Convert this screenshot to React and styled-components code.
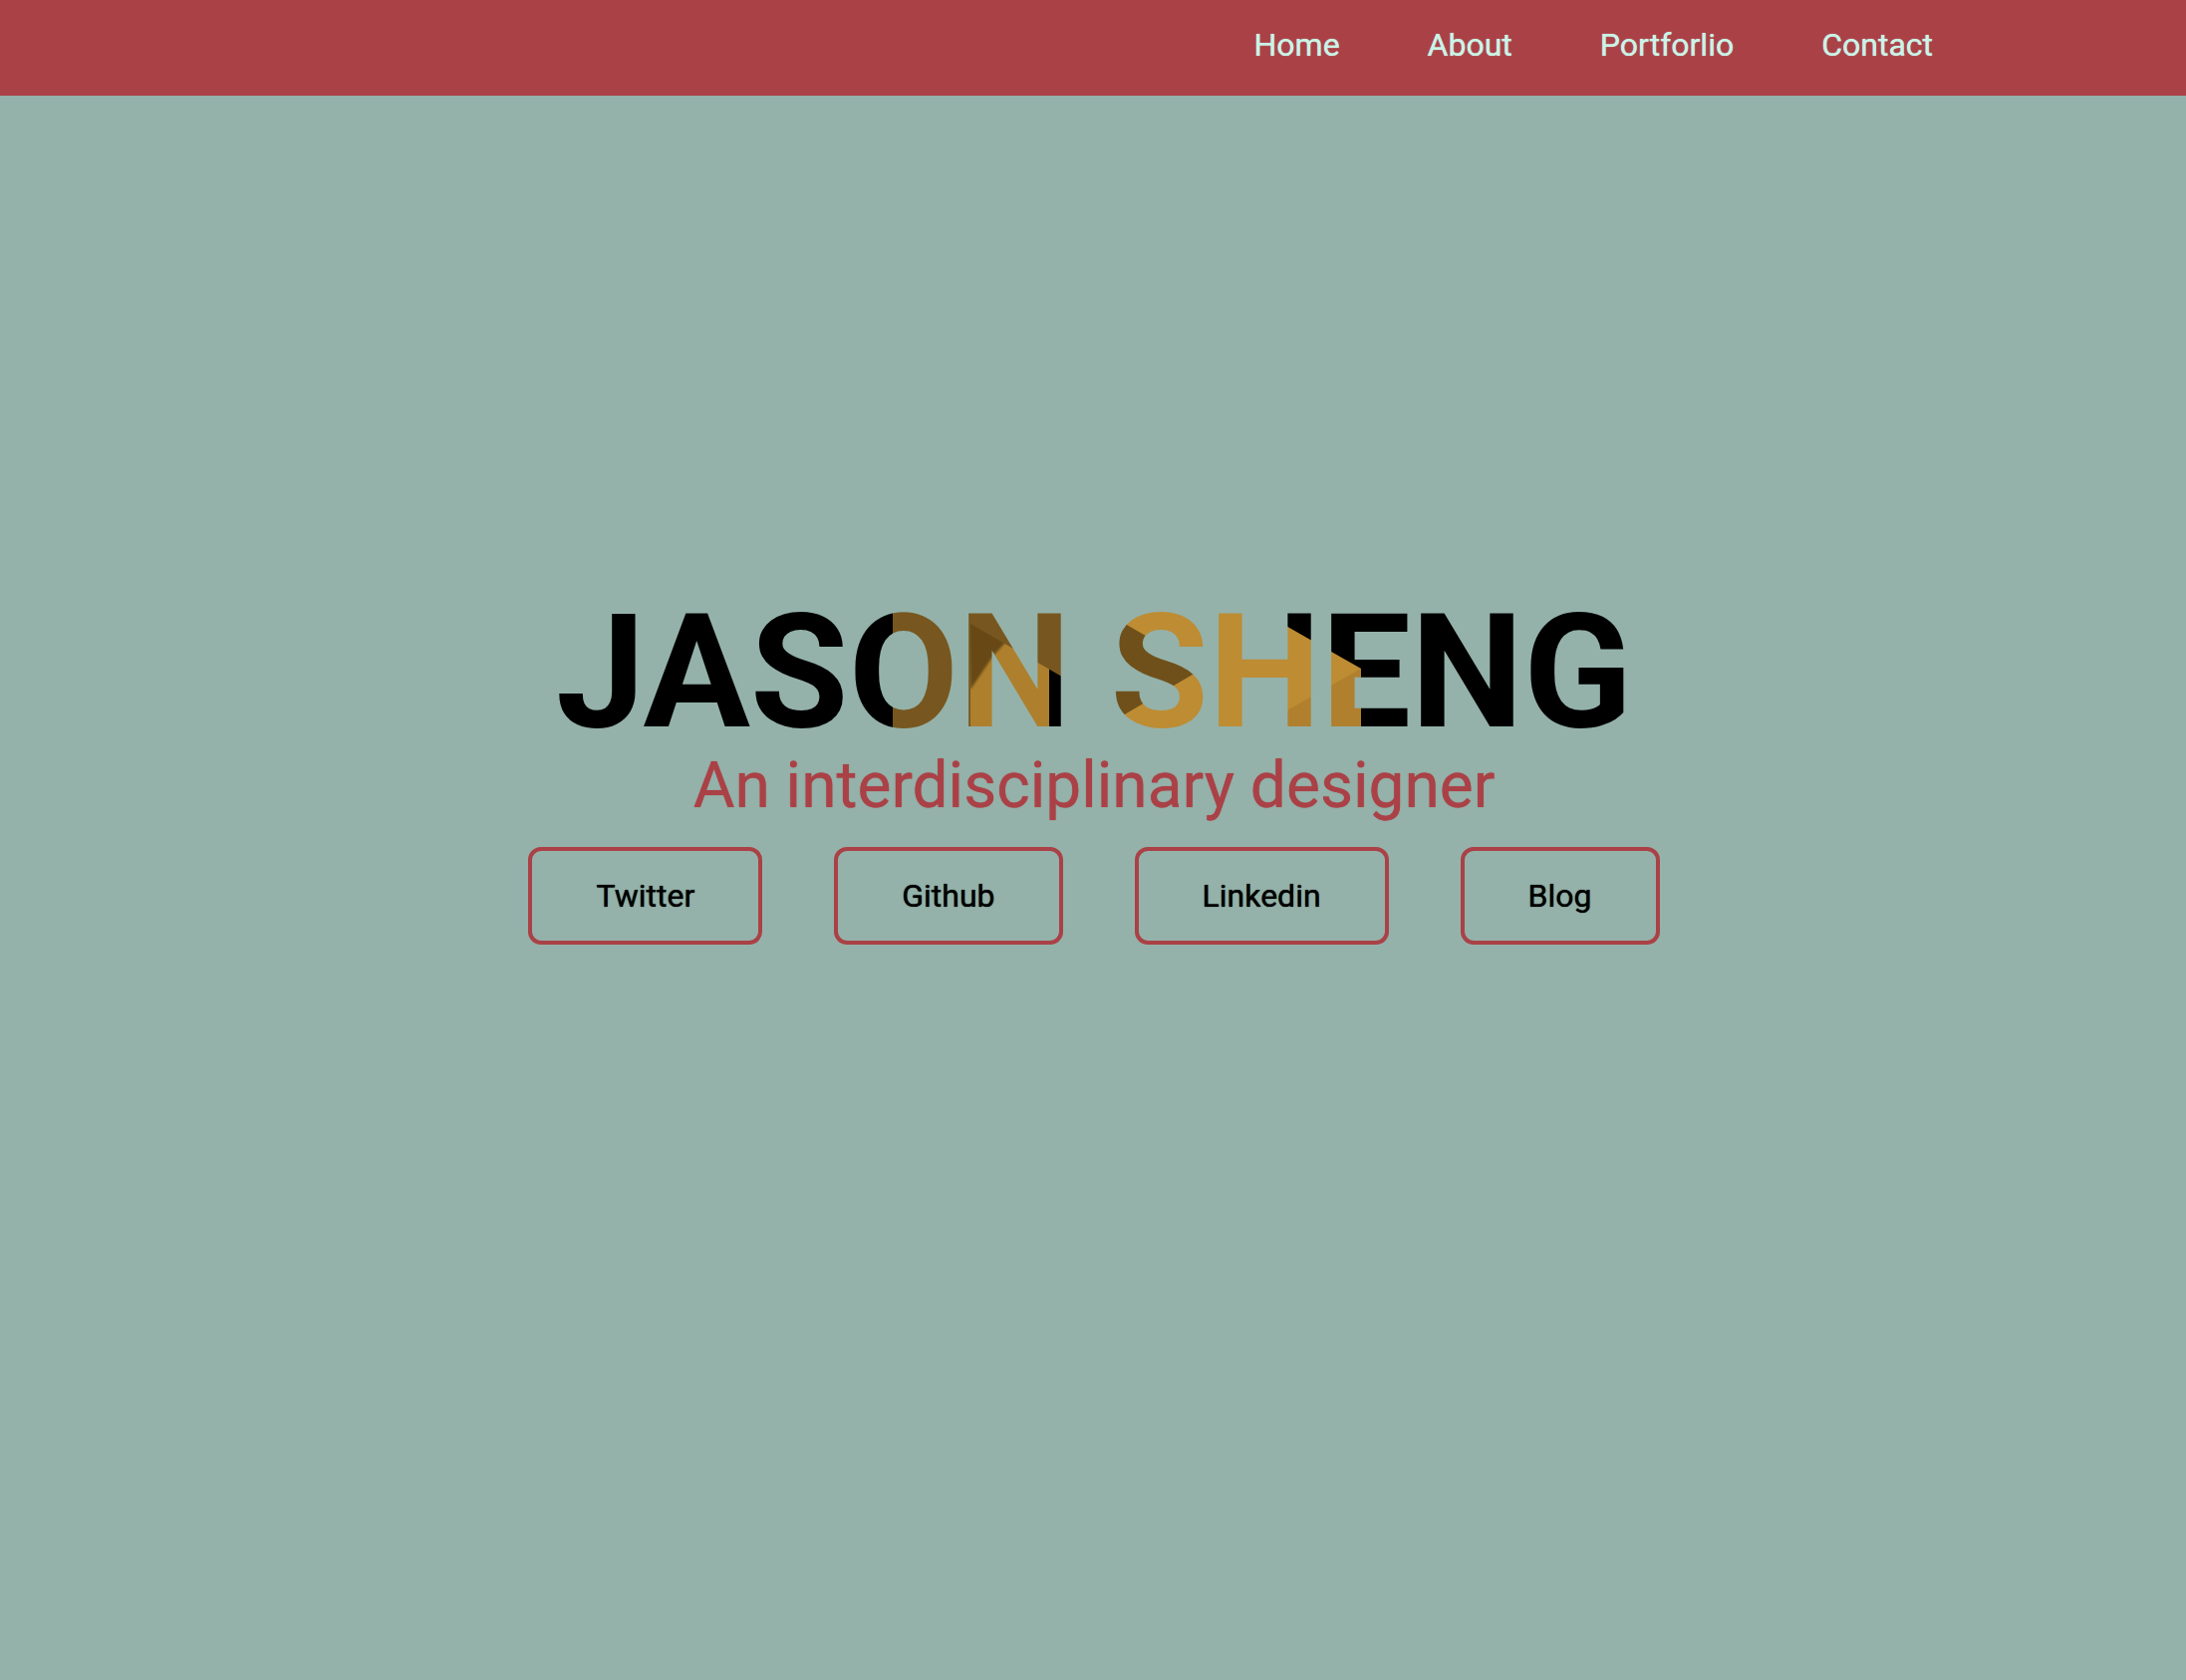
import React from "react";
import styled, { createGlobalStyle } from "styled-components";

const colors = {
  red: "#aa4146",
  sage: "#94b2aa",
  mint: "#cbf3e7",
  ink: "#000000",
};

// Folded ribbon artwork that shows through the letters of the name.
const ribbon = `<svg xmlns="http://www.w3.org/2000/svg" width="560" height="160" viewBox="818 595 560 160">
<defs><filter id="s" x="-10%" y="-10%" width="120%" height="120%"><feGaussianBlur stdDeviation="1"/></filter></defs>
<path fill="#ae802d" d="M972 595H1053V757H972Z"/>
<path fill="#684a19" filter="url(#s)" d="M972 622L1010 644L997 658L974 692Z"/>
<path fill="#77571f" d="M896 595H1090V693L974 626V757H896Z"/>
<path fill="#be8c33" d="M1110 595H1233L1366 671V757H1110Z"/>
<path fill="#b0802f" d="M1366 671V757H1214Z"/>
<path fill="#6f501a" d="M1110 615L1207 671L1110 728Z"/>
</svg>`;
const ribbonUrl = `url("data:image/svg+xml,${encodeURIComponent(ribbon)}")`;

const GlobalStyle = createGlobalStyle`
  *, *::before, *::after { box-sizing: border-box; }
  body {
    margin: 0;
    background: ${colors.sage};
    font-family: Roboto, "Liberation Sans", sans-serif;
  }
`;

const Page = styled.div`
  min-height: 100vh;
  display: flex;
  flex-direction: column;
`;

const Header = styled.header`
  background: ${colors.red};
  padding: 26px 254px 32px 32px;
`;

const Nav = styled.nav`
  display: flex;
  justify-content: flex-end;
  gap: 88px;
`;

const NavLink = styled.a`
  color: ${colors.mint};
  font-size: 32px;
  line-height: 38px;
  text-decoration: none;
  text-shadow: 0 0 1px currentColor;
`;

const Hero = styled.main`
  flex: 1;
  display: flex;
  flex-direction: column;
  align-items: center;
  justify-content: center;
  padding: 0 0 240px 2px;
`;

const Name = styled.h1`
  margin: 0;
  font-size: 160px;
  line-height: 160px;
  font-weight: 700;
  text-transform: uppercase;
  white-space: nowrap;
  color: transparent;
  background: ${ribbonUrl} center top / 560px 160px no-repeat ${colors.ink};
  -webkit-background-clip: text;
  background-clip: text;
`;

const Tagline = styled.p`
  margin: 0;
  color: ${colors.red};
  font-size: 64px;
  line-height: 68px;
  text-shadow: 0 0 1px currentColor;
`;

const LinkRow = styled.div`
  display: flex;
  gap: 72px;
  margin-top: 27px;
`;

const OutlineLink = styled.a`
  padding: 26px 64px;
  border: 4px solid ${colors.red};
  border-radius: 13px;
  color: ${colors.ink};
  font-size: 32px;
  line-height: 38px;
  text-decoration: none;
  text-shadow: 0 0 1px currentColor;
`;

const pages = ["Home", "About", "Portforlio", "Contact"];
const profiles = ["Twitter", "Github", "Linkedin", "Blog"];

export default function App() {
  return (
    <>
      <GlobalStyle />
      <Page>
        <Header>
          <Nav>
            {pages.map((page) => (
              <NavLink key={page} href={`#${page.toLowerCase()}`}>
                {page}
              </NavLink>
            ))}
          </Nav>
        </Header>
        <Hero>
          <Name>Jason Sheng</Name>
          <Tagline>An interdisciplinary designer</Tagline>
          <LinkRow>
            {profiles.map((profile) => (
              <OutlineLink key={profile} href={`#${profile.toLowerCase()}`}>
                {profile}
              </OutlineLink>
            ))}
          </LinkRow>
        </Hero>
      </Page>
    </>
  );
}
